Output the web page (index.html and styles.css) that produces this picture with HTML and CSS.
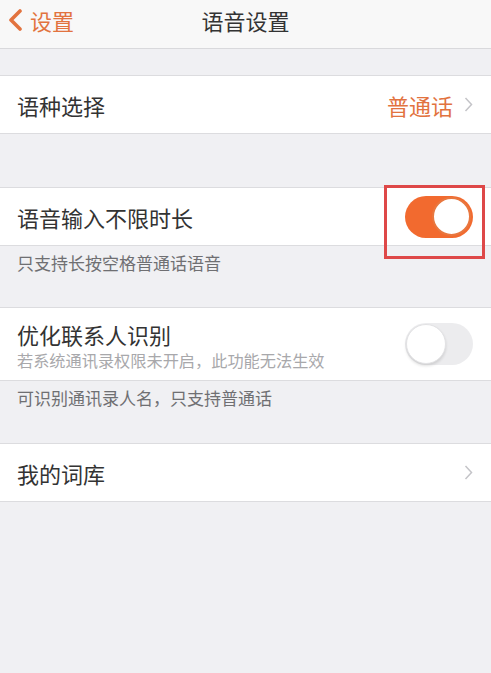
FILE: index.html
```html
<!DOCTYPE html>
<html lang="zh">
<head>
<meta charset="utf-8">
<link rel="stylesheet" href="styles.css">
</head>
<body>
<header class="nav">
  <div class="back">
    <svg class="back-icon" width="16" height="22" viewBox="0 0 16 22"><polyline points="13,2 4,11 13,20" fill="none" stroke="#e2733f" stroke-width="3.6" stroke-linecap="round" stroke-linejoin="round"/></svg>
    <span>设置</span>
  </div>
  <div class="title">语音设置</div>
  <div></div>
</header>

<section class="group g1">
  <div class="row">
    <span class="label">语种选择</span>
    <span class="value">普通话</span>
    <svg class="chev" width="9" height="15" viewBox="0 0 9 15"><polyline points="1.5,1 7.5,7.5 1.5,14" fill="none" stroke="#c4c4c8" stroke-width="1.5"/></svg>
  </div>
</section>

<section class="group g2">
  <div class="row hl-row">
    <span class="label">语音输入不限时长</span>
    <span class="toggle on"><span class="knob"></span></span>
    <span class="highlight"></span>
  </div>
</section>
<div class="note">只支持长按空格普通话语音</div>

<section class="group">
  <div class="row tall">
    <div class="stack">
      <span class="label">优化联系人识别</span>
      <span class="sub">若系统通讯录权限未开启，此功能无法生效</span>
    </div>
    <span class="toggle off"><span class="knob"></span></span>
  </div>
</section>
<div class="note note-2">可识别通讯录人名，只支持普通话</div>

<section class="group">
  <div class="row">
    <span class="label">我的词库</span>
    <svg class="chev" width="9" height="15" viewBox="0 0 9 15"><polyline points="1.5,1 7.5,7.5 1.5,14" fill="none" stroke="#c4c4c8" stroke-width="1.5"/></svg>
  </div>
</section>
</body>
</html>
```

FILE: styles.css
```css
* { box-sizing: border-box; }
html, body { margin: 0; padding: 0; }
body {
  background: #f0f0f3;
  font-family: "Noto Sans CJK SC", "Noto Sans", sans-serif;
  color: #333;
  width: 491px;
  height: 673px;
  overflow: hidden;
}
.nav {
  height: 49px;
  background: #f8f8f8;
  border-bottom: 1px solid #d9d9dc;
  display: grid;
  grid-template-columns: 1fr auto 1fr;
  align-items: center;
  padding-bottom: 9px;
}
.back {
  display: flex;
  align-items: center;
  gap: 7px;
  padding-left: 7px;
  color: #e2733f;
  font-size: 22px;
  line-height: 26px;
}
.back-icon { display: block; }
.title {
  font-size: 22px;
  line-height: 26px;
  color: #333;
}
.group {
  background: #fff;
  border-top: 1px solid #dcdcdf;
  border-bottom: 1px solid #dcdcdf;
  margin-top: 26px;
}
.g2 { margin-top: 53px; }
.row {
  height: 57px;
  padding: 0 17px 0 17px;
  display: flex;
  align-items: center;
}
.row.tall { height: 72px; }
.hl-row { position: relative; }
.label {
  font-size: 22px;
  line-height: 28px;
  color: #333;
  flex: 1;
}
.stack {
  flex: 1;
  display: flex;
  flex-direction: column;
  padding-top: 1px;
}
.stack .label { line-height: 30px; }
.sub {
  font-size: 16.2px;
  line-height: 22px;
  color: #a8a8ab;
}
.value {
  font-size: 22px;
  line-height: 28px;
  color: #e2733f;
  margin-right: 11px;
}
.chev { display: block; margin-right: 1px; }
.toggle {
  width: 68px;
  height: 42px;
  border-radius: 21px;
  display: flex;
  align-items: center;
  margin-right: 1px;
}
.toggle.on {
  background: #f26a2f;
  justify-content: flex-end;
  padding: 0 2px;
}
.toggle.on .knob {
  width: 39px;
  height: 39px;
  border-radius: 50%;
  background: #fff;
  border: 2px solid #e8773f;
}
.toggle.off {
  background: #ececee;
  justify-content: flex-start;
  padding: 0 1px;
}
.toggle.off .knob {
  width: 40px;
  height: 40px;
  border-radius: 50%;
  background: #fff;
  border: 1px solid #e2e2e4;
  box-shadow: 0 2px 3px rgba(0,0,0,0.12);
}
.highlight {
  position: absolute;
  left: 384px;
  top: -3px;
  width: 101px;
  height: 74px;
  border: 3px solid #de4848;
}
.note {
  height: 61px;
  padding: 5px 17px 0;
  font-size: 17px;
  line-height: 24px;
  color: #6f6f72;
}
.note-2 { height: 62px; }
.note + .group { margin-top: 0; }
```
